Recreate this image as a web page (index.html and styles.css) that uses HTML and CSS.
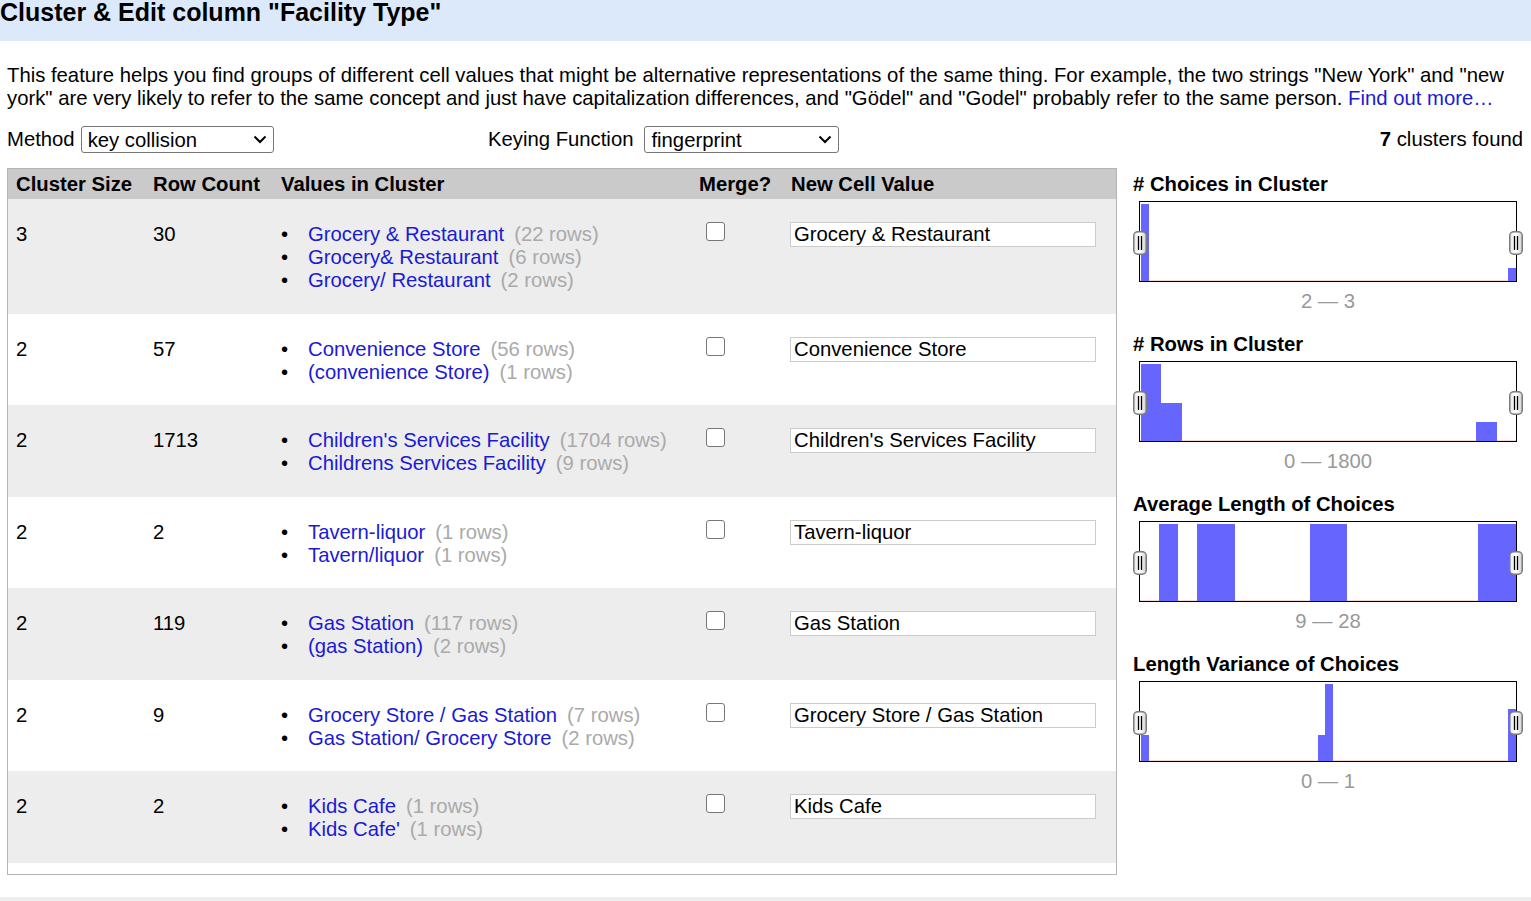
FILE: index.html
```html
<!DOCTYPE html>
<html>
<head>
<meta charset="utf-8">
<title>Cluster &amp; Edit</title>
<link rel="stylesheet" href="styles.css">
</head>
<body>
<div class="dialog-header"><h1 class="title">Cluster &amp; Edit column "Facility Type"</h1></div>
<div class="dialog-body">
  <p class="intro">This feature helps you find groups of different cell values that might be alternative representations of the same thing. For example, the two strings "New York" and "new york" are very likely to refer to the same concept and just have capitalization differences, and "Gödel" and "Godel" probably refer to the same person. <a class="link" href="#">Find out more…</a></p>
  <div class="controls">
    <div class="ctl ctl-method"><span class="ctl-label">Method</span><span class="sel-wrap"><select class="sel sel-method"><option>key collision</option></select><svg class="chev" width="14" height="9" viewBox="0 0 14 9"><path d="M1.5 1.5 L7 7 L12.5 1.5" fill="none" stroke="#000" stroke-width="2"/></svg></span></div>
    <div class="ctl ctl-key"><span class="ctl-label">Keying Function</span><span class="sel-wrap"><select class="sel sel-key"><option>fingerprint</option></select><svg class="chev" width="14" height="9" viewBox="0 0 14 9"><path d="M1.5 1.5 L7 7 L12.5 1.5" fill="none" stroke="#000" stroke-width="2"/></svg></span></div>
    <div class="ctl-count"><b>7</b> clusters found</div>
  </div>
  <div class="main">
    <div class="table-wrap">
      <table class="clusters">
        <colgroup><col class="c1"><col class="c2"><col class="c3"><col class="c4"><col class="c5"></colgroup>
        <thead>
          <tr><th>Cluster Size</th><th>Row Count</th><th>Values in Cluster</th><th>Merge?</th><th>New Cell Value</th></tr>
        </thead>
        <tbody>
          <tr class="odd">
            <td>3</td><td>30</td>
            <td><ul class="vals">
              <li><a class="val" href="#">Grocery &amp; Restaurant</a><span class="cnt">(22 rows)</span></li>
              <li><a class="val" href="#">Grocery&amp; Restaurant</a><span class="cnt">(6 rows)</span></li>
              <li><a class="val" href="#">Grocery/ Restaurant</a><span class="cnt">(2 rows)</span></li>
            </ul></td>
            <td><input type="checkbox" class="chk"></td>
            <td><input type="text" class="newval" value="Grocery &amp; Restaurant"></td>
          </tr>
          <tr class="even">
            <td>2</td><td>57</td>
            <td><ul class="vals">
              <li><a class="val" href="#">Convenience Store</a><span class="cnt">(56 rows)</span></li>
              <li><a class="val" href="#">(convenience Store)</a><span class="cnt">(1 rows)</span></li>
            </ul></td>
            <td><input type="checkbox" class="chk"></td>
            <td><input type="text" class="newval" value="Convenience Store"></td>
          </tr>
          <tr class="odd">
            <td>2</td><td>1713</td>
            <td><ul class="vals">
              <li><a class="val" href="#">Children's Services Facility</a><span class="cnt">(1704 rows)</span></li>
              <li><a class="val" href="#">Childrens Services Facility</a><span class="cnt">(9 rows)</span></li>
            </ul></td>
            <td><input type="checkbox" class="chk"></td>
            <td><input type="text" class="newval" value="Children's Services Facility"></td>
          </tr>
          <tr class="even">
            <td>2</td><td>2</td>
            <td><ul class="vals">
              <li><a class="val" href="#">Tavern-liquor</a><span class="cnt">(1 rows)</span></li>
              <li><a class="val" href="#">Tavern/liquor</a><span class="cnt">(1 rows)</span></li>
            </ul></td>
            <td><input type="checkbox" class="chk"></td>
            <td><input type="text" class="newval" value="Tavern-liquor"></td>
          </tr>
          <tr class="odd">
            <td>2</td><td>119</td>
            <td><ul class="vals">
              <li><a class="val" href="#">Gas Station</a><span class="cnt">(117 rows)</span></li>
              <li><a class="val" href="#">(gas Station)</a><span class="cnt">(2 rows)</span></li>
            </ul></td>
            <td><input type="checkbox" class="chk"></td>
            <td><input type="text" class="newval" value="Gas Station"></td>
          </tr>
          <tr class="even">
            <td>2</td><td>9</td>
            <td><ul class="vals">
              <li><a class="val" href="#">Grocery Store / Gas Station</a><span class="cnt">(7 rows)</span></li>
              <li><a class="val" href="#">Gas Station/ Grocery Store</a><span class="cnt">(2 rows)</span></li>
            </ul></td>
            <td><input type="checkbox" class="chk"></td>
            <td><input type="text" class="newval" value="Grocery Store / Gas Station"></td>
          </tr>
          <tr class="odd">
            <td>2</td><td>2</td>
            <td><ul class="vals">
              <li><a class="val" href="#">Kids Cafe</a><span class="cnt">(1 rows)</span></li>
              <li><a class="val" href="#">Kids Cafe'</a><span class="cnt">(1 rows)</span></li>
            </ul></td>
            <td><input type="checkbox" class="chk"></td>
            <td><input type="text" class="newval" value="Kids Cafe"></td>
          </tr>
        </tbody>
      </table>
    </div>
    <div class="facets">
      <div class="facet">
        <div class="facet-title"># Choices in Cluster</div>
        <div class="hist">
          <svg class="hist-svg" width="376" height="79" viewBox="0 0 376 79">
            <rect x="0" y="78" width="376" height="1" fill="#f6d6d6"/>
            <rect x="1" y="2" width="8" height="77" fill="#6666ff"/>
            <rect x="368" y="66" width="8" height="13" fill="#6666ff"/>
          </svg>
          <svg class="handle handle-l" width="14" height="24" viewBox="0 0 14 24"><defs><linearGradient id="hg1" x1="0" y1="0" x2="1" y2="0"><stop offset="0" stop-color="#e8e8e8"/><stop offset="0.5" stop-color="#ffffff"/><stop offset="1" stop-color="#cfcfcf"/></linearGradient></defs><rect x="0.75" y="0.75" width="12.5" height="22.5" rx="4" fill="url(#hg1)" stroke="#7a7a7a" stroke-width="1.5"/><line x1="5.5" y1="5" x2="5.5" y2="19" stroke="#000" stroke-width="1.3"/><line x1="8.5" y1="5" x2="8.5" y2="19" stroke="#000" stroke-width="1.3"/></svg>
          <svg class="handle handle-r" width="14" height="24" viewBox="0 0 14 24"><rect x="0.75" y="0.75" width="12.5" height="22.5" rx="4" fill="url(#hg1)" stroke="#7a7a7a" stroke-width="1.5"/><line x1="5.5" y1="5" x2="5.5" y2="19" stroke="#000" stroke-width="1.3"/><line x1="8.5" y1="5" x2="8.5" y2="19" stroke="#000" stroke-width="1.3"/></svg>
        </div>
        <div class="range">2 — 3</div>
      </div>
      <div class="facet">
        <div class="facet-title"># Rows in Cluster</div>
        <div class="hist">
          <svg class="hist-svg" width="376" height="79" viewBox="0 0 376 79">
            <rect x="0" y="78" width="376" height="1" fill="#f6d6d6"/>
            <rect x="1" y="2" width="20" height="77" fill="#6666ff"/>
            <rect x="21" y="41" width="21" height="38" fill="#6666ff"/>
            <rect x="336" y="60" width="21" height="19" fill="#6666ff"/>
          </svg>
          <svg class="handle handle-l" width="14" height="24" viewBox="0 0 14 24"><rect x="0.75" y="0.75" width="12.5" height="22.5" rx="4" fill="url(#hg1)" stroke="#7a7a7a" stroke-width="1.5"/><line x1="5.5" y1="5" x2="5.5" y2="19" stroke="#000" stroke-width="1.3"/><line x1="8.5" y1="5" x2="8.5" y2="19" stroke="#000" stroke-width="1.3"/></svg>
          <svg class="handle handle-r" width="14" height="24" viewBox="0 0 14 24"><rect x="0.75" y="0.75" width="12.5" height="22.5" rx="4" fill="url(#hg1)" stroke="#7a7a7a" stroke-width="1.5"/><line x1="5.5" y1="5" x2="5.5" y2="19" stroke="#000" stroke-width="1.3"/><line x1="8.5" y1="5" x2="8.5" y2="19" stroke="#000" stroke-width="1.3"/></svg>
        </div>
        <div class="range">0 — 1800</div>
      </div>
      <div class="facet">
        <div class="facet-title">Average Length of Choices</div>
        <div class="hist">
          <svg class="hist-svg" width="376" height="79" viewBox="0 0 376 79">
            <rect x="0" y="78" width="376" height="1" fill="#f6d6d6"/>
            <rect x="19" y="2" width="19" height="77" fill="#6666ff"/>
            <rect x="57" y="2" width="38" height="77" fill="#6666ff"/>
            <rect x="170" y="2" width="37" height="77" fill="#6666ff"/>
            <rect x="338" y="2" width="38" height="77" fill="#6666ff"/>
          </svg>
          <svg class="handle handle-l" width="14" height="24" viewBox="0 0 14 24"><rect x="0.75" y="0.75" width="12.5" height="22.5" rx="4" fill="url(#hg1)" stroke="#7a7a7a" stroke-width="1.5"/><line x1="5.5" y1="5" x2="5.5" y2="19" stroke="#000" stroke-width="1.3"/><line x1="8.5" y1="5" x2="8.5" y2="19" stroke="#000" stroke-width="1.3"/></svg>
          <svg class="handle handle-r" width="14" height="24" viewBox="0 0 14 24"><rect x="0.75" y="0.75" width="12.5" height="22.5" rx="4" fill="url(#hg1)" stroke="#7a7a7a" stroke-width="1.5"/><line x1="5.5" y1="5" x2="5.5" y2="19" stroke="#000" stroke-width="1.3"/><line x1="8.5" y1="5" x2="8.5" y2="19" stroke="#000" stroke-width="1.3"/></svg>
        </div>
        <div class="range">9 — 28</div>
      </div>
      <div class="facet">
        <div class="facet-title">Length Variance of Choices</div>
        <div class="hist">
          <svg class="hist-svg" width="376" height="79" viewBox="0 0 376 79">
            <rect x="0" y="78" width="376" height="1" fill="#f6d6d6"/>
            <rect x="1" y="53" width="8" height="26" fill="#6666ff"/>
            <rect x="178" y="53" width="7" height="26" fill="#6666ff"/>
            <rect x="185" y="2" width="8" height="77" fill="#6666ff"/>
            <rect x="368" y="27" width="8" height="52" fill="#6666ff"/>
          </svg>
          <svg class="handle handle-l" width="14" height="24" viewBox="0 0 14 24"><rect x="0.75" y="0.75" width="12.5" height="22.5" rx="4" fill="url(#hg1)" stroke="#7a7a7a" stroke-width="1.5"/><line x1="5.5" y1="5" x2="5.5" y2="19" stroke="#000" stroke-width="1.3"/><line x1="8.5" y1="5" x2="8.5" y2="19" stroke="#000" stroke-width="1.3"/></svg>
          <svg class="handle handle-r" width="14" height="24" viewBox="0 0 14 24"><rect x="0.75" y="0.75" width="12.5" height="22.5" rx="4" fill="url(#hg1)" stroke="#7a7a7a" stroke-width="1.5"/><line x1="5.5" y1="5" x2="5.5" y2="19" stroke="#000" stroke-width="1.3"/><line x1="8.5" y1="5" x2="8.5" y2="19" stroke="#000" stroke-width="1.3"/></svg>
        </div>
        <div class="range">0 — 1</div>
      </div>
    </div>
  </div>
</div>
<div class="dialog-footer"></div>
</body>
</html>
```
FILE: styles.css
```css
html, body {
  margin: 0;
  padding: 0;
  background: #ffffff;
}
body {
  font-family: "Liberation Sans", Arial, sans-serif;
  font-size: 20.3px;
  line-height: 23px;
  color: #000;
  overflow: hidden;
}
.dialog-header {
  background: #dce9fb;
  height: 41px;
  overflow: hidden;
}
.title {
  margin: 0;
  font-size: 25px;
  line-height: 24px;
  font-weight: bold;
}
.dialog-body {
  padding: 0 8px 0 7px;
}
.intro {
  margin: 23px 0 0 0;
}
.link {
  color: #1a1ad6;
  text-decoration: none;
}
.controls {
  display: flex;
  align-items: center;
  margin-top: 16px;
  height: 27px;
}
.ctl {
  display: flex;
  align-items: center;
}
.ctl-method {
  width: 481px;
}
.ctl-label {
  margin-right: 6px;
}
.ctl-key .ctl-label {
  margin-right: 11px;
}
.ctl-count {
  margin-left: auto;
  white-space: nowrap;
}
.sel-wrap {
  position: relative;
  display: block;
}
.sel {
  appearance: none;
  -webkit-appearance: none;
  display: block;
  box-sizing: border-box;
  font-family: "Liberation Sans", Arial, sans-serif;
  font-size: 20.3px;
  height: 27px;
  border: 1px solid #767676;
  border-radius: 3px;
  background: #fff;
  color: #000;
  padding: 0 24px 0 6px;
}
.chev {
  position: absolute;
  right: 7px;
  top: 9px;
  pointer-events: none;
}
.sel-method {
  width: 193px;
}
.sel-key {
  width: 195px;
}
.main {
  display: flex;
  align-items: flex-start;
  margin-top: 15px;
}
.table-wrap {
  box-sizing: border-box;
  width: 1110px;
  height: 707px;
  border: 1px solid #b4b4b4;
  overflow: hidden;
  flex: none;
}
.clusters {
  width: 100%;
  table-layout: fixed;
  border-collapse: collapse;
}
.c1 { width: 137px; }
.c2 { width: 128px; }
.c3 { width: 418px; }
.c4 { width: 92px; }
.c5 { width: auto; }
.clusters th {
  background: #cacaca;
  text-align: left;
  font-weight: bold;
  padding: 4px 8px 3px 8px;
  white-space: nowrap;
}
.clusters td {
  vertical-align: top;
  padding: 24px 8px 21.5px 8px;
  white-space: nowrap;
}
.odd td {
  background: #ededed;
}
.even td {
  background: #ffffff;
}
.vals {
  margin: 0;
  padding: 0 0 0 27px;
  list-style: none;
}
.vals li::before {
  content: "•";
  display: inline-block;
  width: 27px;
  margin-left: -27px;
  color: #000;
}
.val {
  color: #1a1ad6;
  text-decoration: none;
}
.cnt {
  color: #aaaaaa;
  margin-left: 10px;
}
.chk {
  appearance: none;
  -webkit-appearance: none;
  box-sizing: border-box;
  width: 19px;
  height: 19px;
  margin: -1px 0 0 7px;
  border: 1.5px solid #777;
  border-radius: 3px;
  background: #fff;
  display: block;
}
.newval {
  display: block;
  box-sizing: border-box;
  width: 306px;
  height: 25px;
  margin: -1px 0 0 -1px;
  border: 1px solid #cccccc;
  padding: 0 3px;
  font-family: "Liberation Sans", Arial, sans-serif;
  font-size: 20.3px;
  color: #000;
  background: #fff;
  outline: none;
}
.facets {
  margin-left: 16px;
  width: 390px;
  padding-top: 5px;
  flex: none;
}
.facet {
  margin-bottom: 20px;
}
.facet-title {
  font-weight: bold;
  white-space: nowrap;
}
.hist {
  position: relative;
  box-sizing: border-box;
  width: 378px;
  height: 81px;
  margin: 5px 0 0 6px;
  border: 1px solid #000;
  background: #fff;
}
.hist-svg {
  display: block;
}
.handle {
  position: absolute;
  top: 29px;
  display: block;
}
.handle-l {
  left: -7px;
}
.handle-r {
  right: -7px;
}
.range {
  width: 378px;
  margin: 8px 0 0 6px;
  text-align: center;
  color: #999999;
}
.dialog-footer {
  background: #eeeeee;
  height: 30px;
  margin-top: 22px;
}
```
